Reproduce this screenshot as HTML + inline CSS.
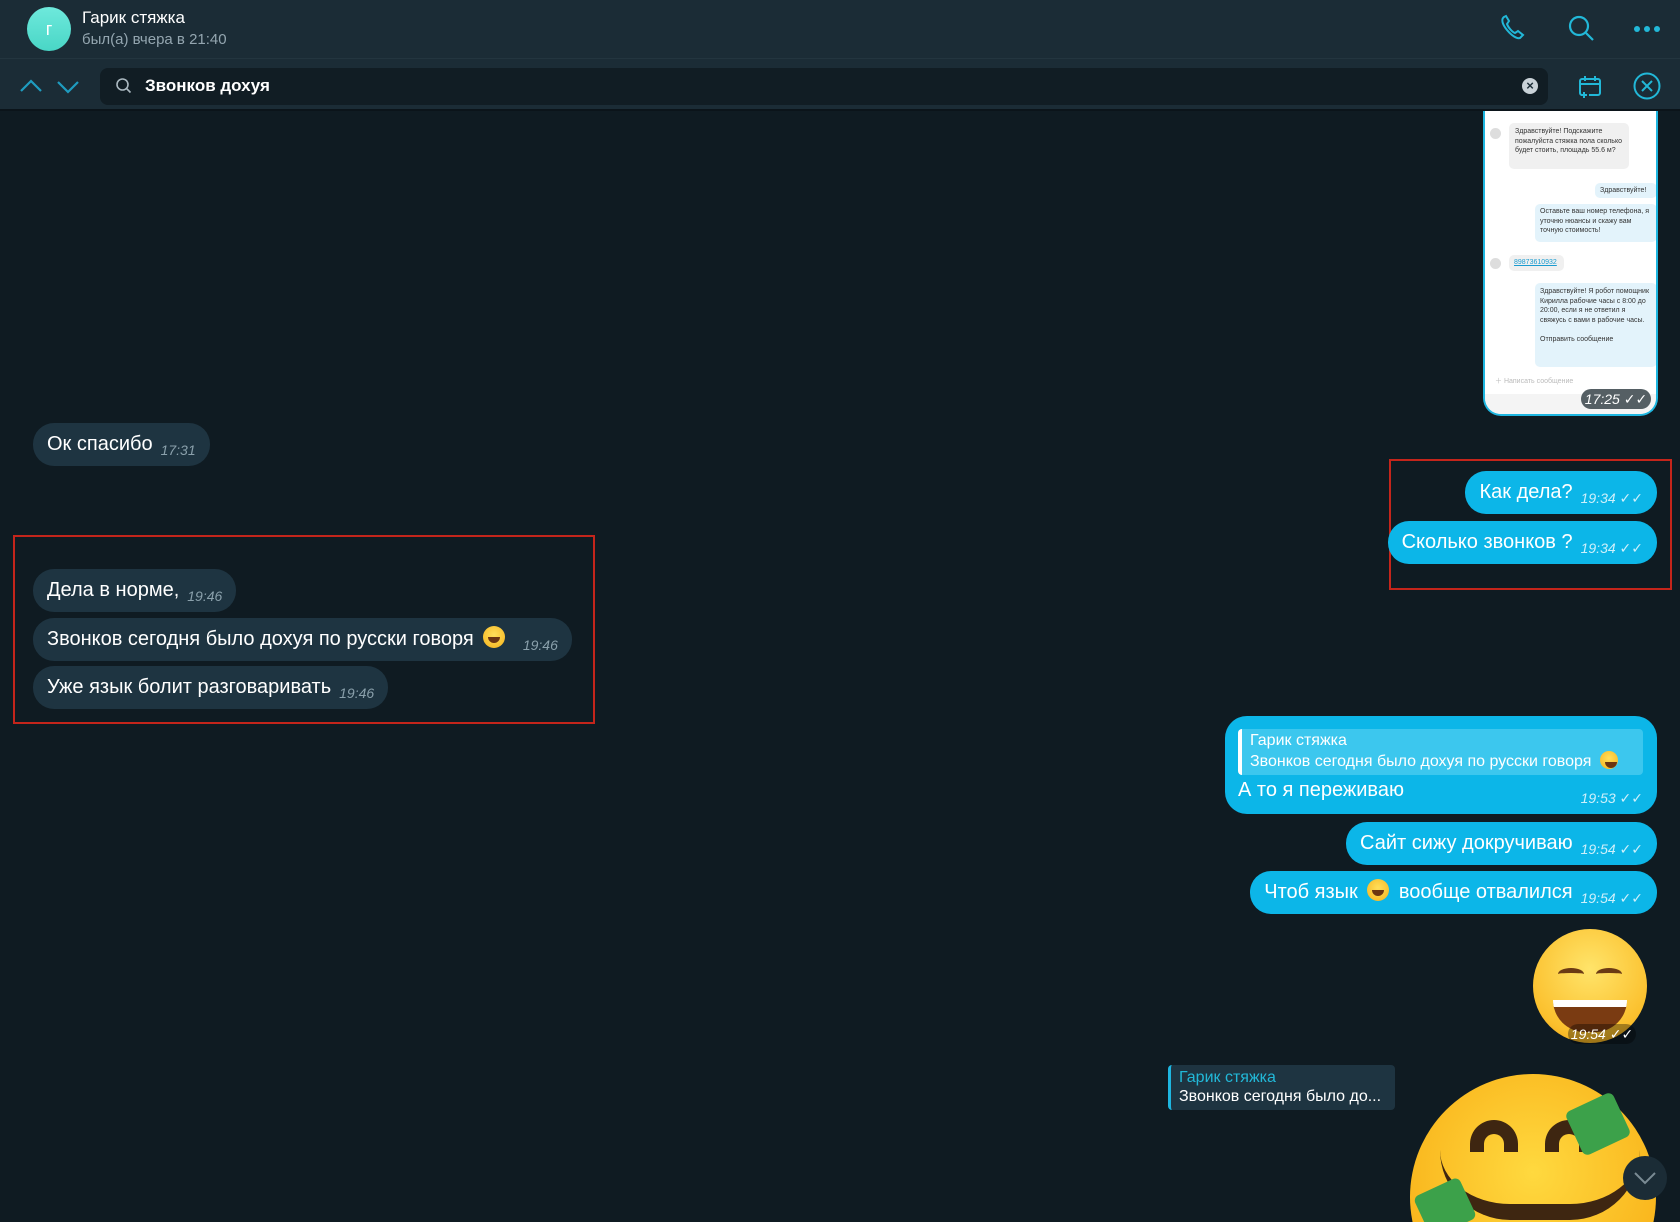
<!DOCTYPE html>
<html><head><meta charset="utf-8">
<style>
*{margin:0;padding:0;box-sizing:border-box}
html{width:1680px;height:1222px;overflow:hidden}
body{width:1680px;height:1222px;background:#0f1b22;font-family:"Liberation Sans","DejaVu Sans",sans-serif;position:relative;overflow:hidden;color:#fff}
.wrap{position:absolute;left:0;top:0;width:1680px;height:1222px;overflow:hidden}
.a{position:absolute}
.hdr{left:0;top:0;width:1680px;height:59px;background:#1b2c36;border-bottom:1px solid #23353f}
.sr{left:0;top:59px;width:1680px;height:52px;background:#1b2c36;border-bottom:2px solid #0b141a}
.b{position:absolute;height:43px;border-radius:21px;font-size:20px;line-height:43px;padding:0 14px;white-space:nowrap}
.in{background:#1e3441;color:#fff}
.out{background:#0cb6e8;color:#fff}
.t{font-size:14px;font-style:italic;color:rgba(255,255,255,.8);margin-left:8px;position:relative;top:5px}
.in .t{color:#8aa0ab}
.rb{position:absolute;border:2px solid #c4251b}
.em{display:inline-block;width:22px;height:22px;border-radius:50%;background:radial-gradient(circle at 50% 40%,#ffdf5a,#f5b21c);vertical-align:-3px;margin:0 4px;position:relative}
.em::after{content:"";position:absolute;left:5px;top:11px;width:12px;height:6px;background:#6b3512;border-radius:0 0 6px 6px}
</style></head><body><div class="wrap">
<div class="a hdr"></div>
<div class="a" style="left:27px;top:7px;width:44px;height:44px;border-radius:50%;background:linear-gradient(#6ee9dc,#49d6c6);color:#fff;font-size:18px;text-align:center;line-height:44px">г</div>
<div class="a" style="left:82px;top:8px;font-size:17px;color:#fff">Гарик стяжка</div>
<div class="a" style="left:82px;top:31px;font-size:15px;color:#94a6b0">был(а) вчера в 21:40</div>
<svg class="a" style="left:1498px;top:13px" width="30" height="30" viewBox="0 0 30 30" fill="none" stroke="#22b8d8" stroke-width="2"><path d="M6 4c-3 2-2 7 3 13s10 9 13 8l3-3-5-4-3 2c-3-1-7-6-8-9l2-3-3-5z"/></svg>
<svg class="a" style="left:1567px;top:14px" width="30" height="30" viewBox="0 0 30 30" fill="none" stroke="#22b8d8" stroke-width="2.2"><circle cx="12" cy="12" r="9"/><path d="M19 19l7 7"/></svg>
<div class="a" style="left:1634px;top:26px;width:6px;height:6px;border-radius:50%;background:#22b8d8;box-shadow:10px 0 #22b8d8,20px 0 #22b8d8"></div>
<div class="a sr"></div>
<svg class="a" style="left:18px;top:76px" width="64" height="20" viewBox="0 0 64 20" fill="none" stroke="#1e9cc0" stroke-width="2.2"><path d="M3 15l10-10 10 10M40 6l10 10 10-10"/></svg>
<div class="a" style="left:100px;top:68px;width:1448px;height:37px;background:#111d24;border-radius:8px"></div>
<svg class="a" style="left:115px;top:77px" width="18" height="18" viewBox="0 0 18 18" fill="none" stroke="#aab8c0" stroke-width="1.6"><circle cx="7.5" cy="7.5" r="5.5"/><path d="M11.5 11.5l4 4"/></svg>
<div class="a" style="left:145px;top:76px;font-size:17px;font-weight:bold;color:#fff">Звонков дохуя</div>
<div class="a" style="left:1522px;top:78px;width:16px;height:16px;border-radius:50%;background:#c9d2d8;color:#1b2c36;font-size:13px;font-weight:bold;text-align:center;line-height:16px">×</div>
<svg class="a" style="left:1577px;top:74px" width="26" height="26" viewBox="0 0 26 26" fill="none" stroke="#22b8d8" stroke-width="2"><path d="M8 21H5a2 2 0 0 1-2-2V7a2 2 0 0 1 2-2h16a2 2 0 0 1 2 2v12a2 2 0 0 1-2 2h-9M3 10h20M8 2v5M18 2v5M7 18v6M4 21h6"/></svg>
<svg class="a" style="left:1632px;top:71px" width="30" height="30" viewBox="0 0 30 30" fill="none" stroke="#22b8d8" stroke-width="2"><circle cx="15" cy="15" r="12.5"/><path d="M10 10l10 10M20 10L10 20"/></svg>

<div class="a" style="left:1483px;top:111px;width:175px;height:305px;background:#fff;border:2px solid #1eb6e0;border-top:none;border-radius:0 0 18px 18px;overflow:hidden;color:#333;font-size:7px;line-height:9.5px">
 <div class="a" style="left:5px;top:17px;width:11px;height:11px;border-radius:50%;background:#ddd"></div>
 <div class="a" style="left:24px;top:12px;width:120px;height:46px;background:#f0f0f0;border-radius:5px;padding:4px 6px">Здравствуйте! Подскажите пожалуйста стяжка пола сколько будет стоить, площадь 55.6 м?</div>
 <div class="a" style="left:110px;top:72px;width:62px;height:15px;background:#e3f3fb;border-radius:5px;padding:3px 5px">Здравствуйте!</div>
 <div class="a" style="left:50px;top:93px;width:122px;height:38px;background:#e3f3fb;border-radius:5px;padding:3px 5px">Оставьте ваш номер телефона, я уточню нюансы и скажу вам точную стоимость!</div>
 <div class="a" style="left:5px;top:147px;width:11px;height:11px;border-radius:50%;background:#ddd"></div>
 <div class="a" style="left:24px;top:144px;width:55px;height:16px;background:#f0f0f0;border-radius:5px;padding:3px 5px;color:#1a9bd0;text-decoration:underline">89873610932</div>
 <div class="a" style="left:50px;top:172px;width:122px;height:84px;background:#e3f3fb;border-radius:5px;padding:4px 5px">Здравствуйте! Я робот помощник Кирилла рабочие часы с 8:00 до 20:00, если я не ответил я свяжусь с вами в рабочие часы.<br><br>Отправить сообщение</div>
 <div class="a" style="left:10px;top:266px;color:#bbb">＋ Написать сообщение</div>
 <div class="a" style="left:0;top:283px;width:175px;height:25px;background:#f4f4f4"></div>
</div>
<div class="a" style="left:1581px;top:389px;width:70px;height:20px;border-radius:10px;background:#555f64;color:#fff;font-size:14px;font-style:italic;line-height:20px;text-align:center">17:25 ✓✓</div>

<div class="b in" style="left:33px;top:423px">Ок спасибо<span class="t">17:31</span></div>

<div class="rb" style="left:13px;top:535px;width:582px;height:189px"></div>
<div class="b in" style="left:33px;top:569px">Дела в норме,<span class="t">19:46</span></div>
<div class="b in" style="left:33px;top:618px">Звонков сегодня было дохуя по русски говоря <span class="em"></span> <span class="t">19:46</span></div>
<div class="b in" style="left:33px;top:666px">Уже язык болит разговаривать<span class="t">19:46</span></div>

<div class="rb" style="left:1389px;top:459px;width:283px;height:131px"></div>
<div class="b out" style="right:23px;top:471px">Как дела?<span class="t">19:34 ✓✓</span></div>
<div class="b out" style="right:23px;top:521px">Сколько звонков ?<span class="t">19:34 ✓✓</span></div>

<div class="a out" style="left:1225px;top:716px;width:432px;height:98px;border-radius:22px;background:#0cb6e8">
 <div class="a" style="left:13px;top:13px;width:405px;height:46px;background:#3cc7ee;border-left:4px solid #fff;border-radius:4px;padding:2px 8px;font-size:16px;line-height:20px;white-space:nowrap">Гарик стяжка<br>Звонков сегодня было дохуя по русски говоря <span class="em" style="width:18px;height:18px"></span></div>
 <div class="a" style="left:13px;top:63px;font-size:20px">А то я переживаю</div>
 <div class="a" style="right:14px;top:74px;font-size:14px;font-style:italic;color:rgba(255,255,255,.8)">19:53 ✓✓</div>
</div>
<div class="b out" style="right:23px;top:822px">Сайт сижу докручиваю<span class="t">19:54 ✓✓</span></div>
<div class="b out" style="right:23px;top:871px">Чтоб язык <span class="em"></span> вообще отвалился<span class="t">19:54 ✓✓</span></div>

<div class="a" style="left:1533px;top:929px;width:114px;height:114px;border-radius:50%;background:radial-gradient(circle at 50% 35%,#ffe46a,#fbc02d 70%,#e89a10)"></div>
<div class="a" style="left:1553px;top:1000px;width:74px;height:32px;border-radius:0 0 37px 37px;background:#7a3b12;border-top:7px solid #fff"></div>
<div class="a" style="left:1558px;top:968px;width:26px;height:12px;border-top:5px solid #6b3a14;border-radius:50% 50% 0 0"></div>
<div class="a" style="left:1596px;top:968px;width:26px;height:12px;border-top:5px solid #6b3a14;border-radius:50% 50% 0 0"></div>
<div class="a" style="left:1568px;top:1024px;width:68px;height:20px;border-radius:10px;background:rgba(0,0,0,.35);color:#fff;font-size:14px;font-style:italic;line-height:20px;text-align:center;white-space:nowrap">19:54 ✓✓</div>

<div class="a" style="left:1168px;top:1065px;width:227px;height:45px;background:#1e3441;border-left:3px solid #1eb6e0;border-radius:4px;padding:3px 8px;font-size:16px;line-height:19px;white-space:nowrap">
<span style="color:#22b8d8">Гарик стяжка</span><br>Звонков сегодня было до...</div>

<div class="a" style="left:1380px;top:1060px;width:300px;height:162px;overflow:hidden">
 <div class="a" style="left:30px;top:14px;width:246px;height:246px;border-radius:50%;background:radial-gradient(circle at 50% 40%,#ffd93f,#f9b31a 75%,#f08c10)"></div>
 <div class="a" style="left:90px;top:60px;width:48px;height:32px;border:14px solid #3e2611;border-bottom:none;border-radius:24px 24px 0 0"></div>
 <div class="a" style="left:165px;top:60px;width:48px;height:32px;border:14px solid #3e2611;border-bottom:none;border-radius:24px 24px 0 0"></div>
 <div class="a" style="left:60px;top:90px;width:200px;height:70px;border-bottom:16px solid #3e2611;border-radius:0 0 100px 100px"></div>
 <div class="a" style="left:192px;top:40px;width:52px;height:48px;background:#3ca14a;border-radius:6px;transform:rotate(-25deg)"></div>
 <div class="a" style="left:40px;top:125px;width:50px;height:45px;background:#3ca14a;border-radius:6px;transform:rotate(-25deg)"></div>
 <div class="a" style="left:243px;top:96px;width:44px;height:44px;border-radius:50%;background:#1b2c36"></div>
 <svg class="a" style="left:253px;top:110px" width="24" height="16" viewBox="0 0 24 16" fill="none" stroke="#7a8b94" stroke-width="2"><path d="M2 3l10 10 10-10"/></svg>
</div>
</div></body></html>
